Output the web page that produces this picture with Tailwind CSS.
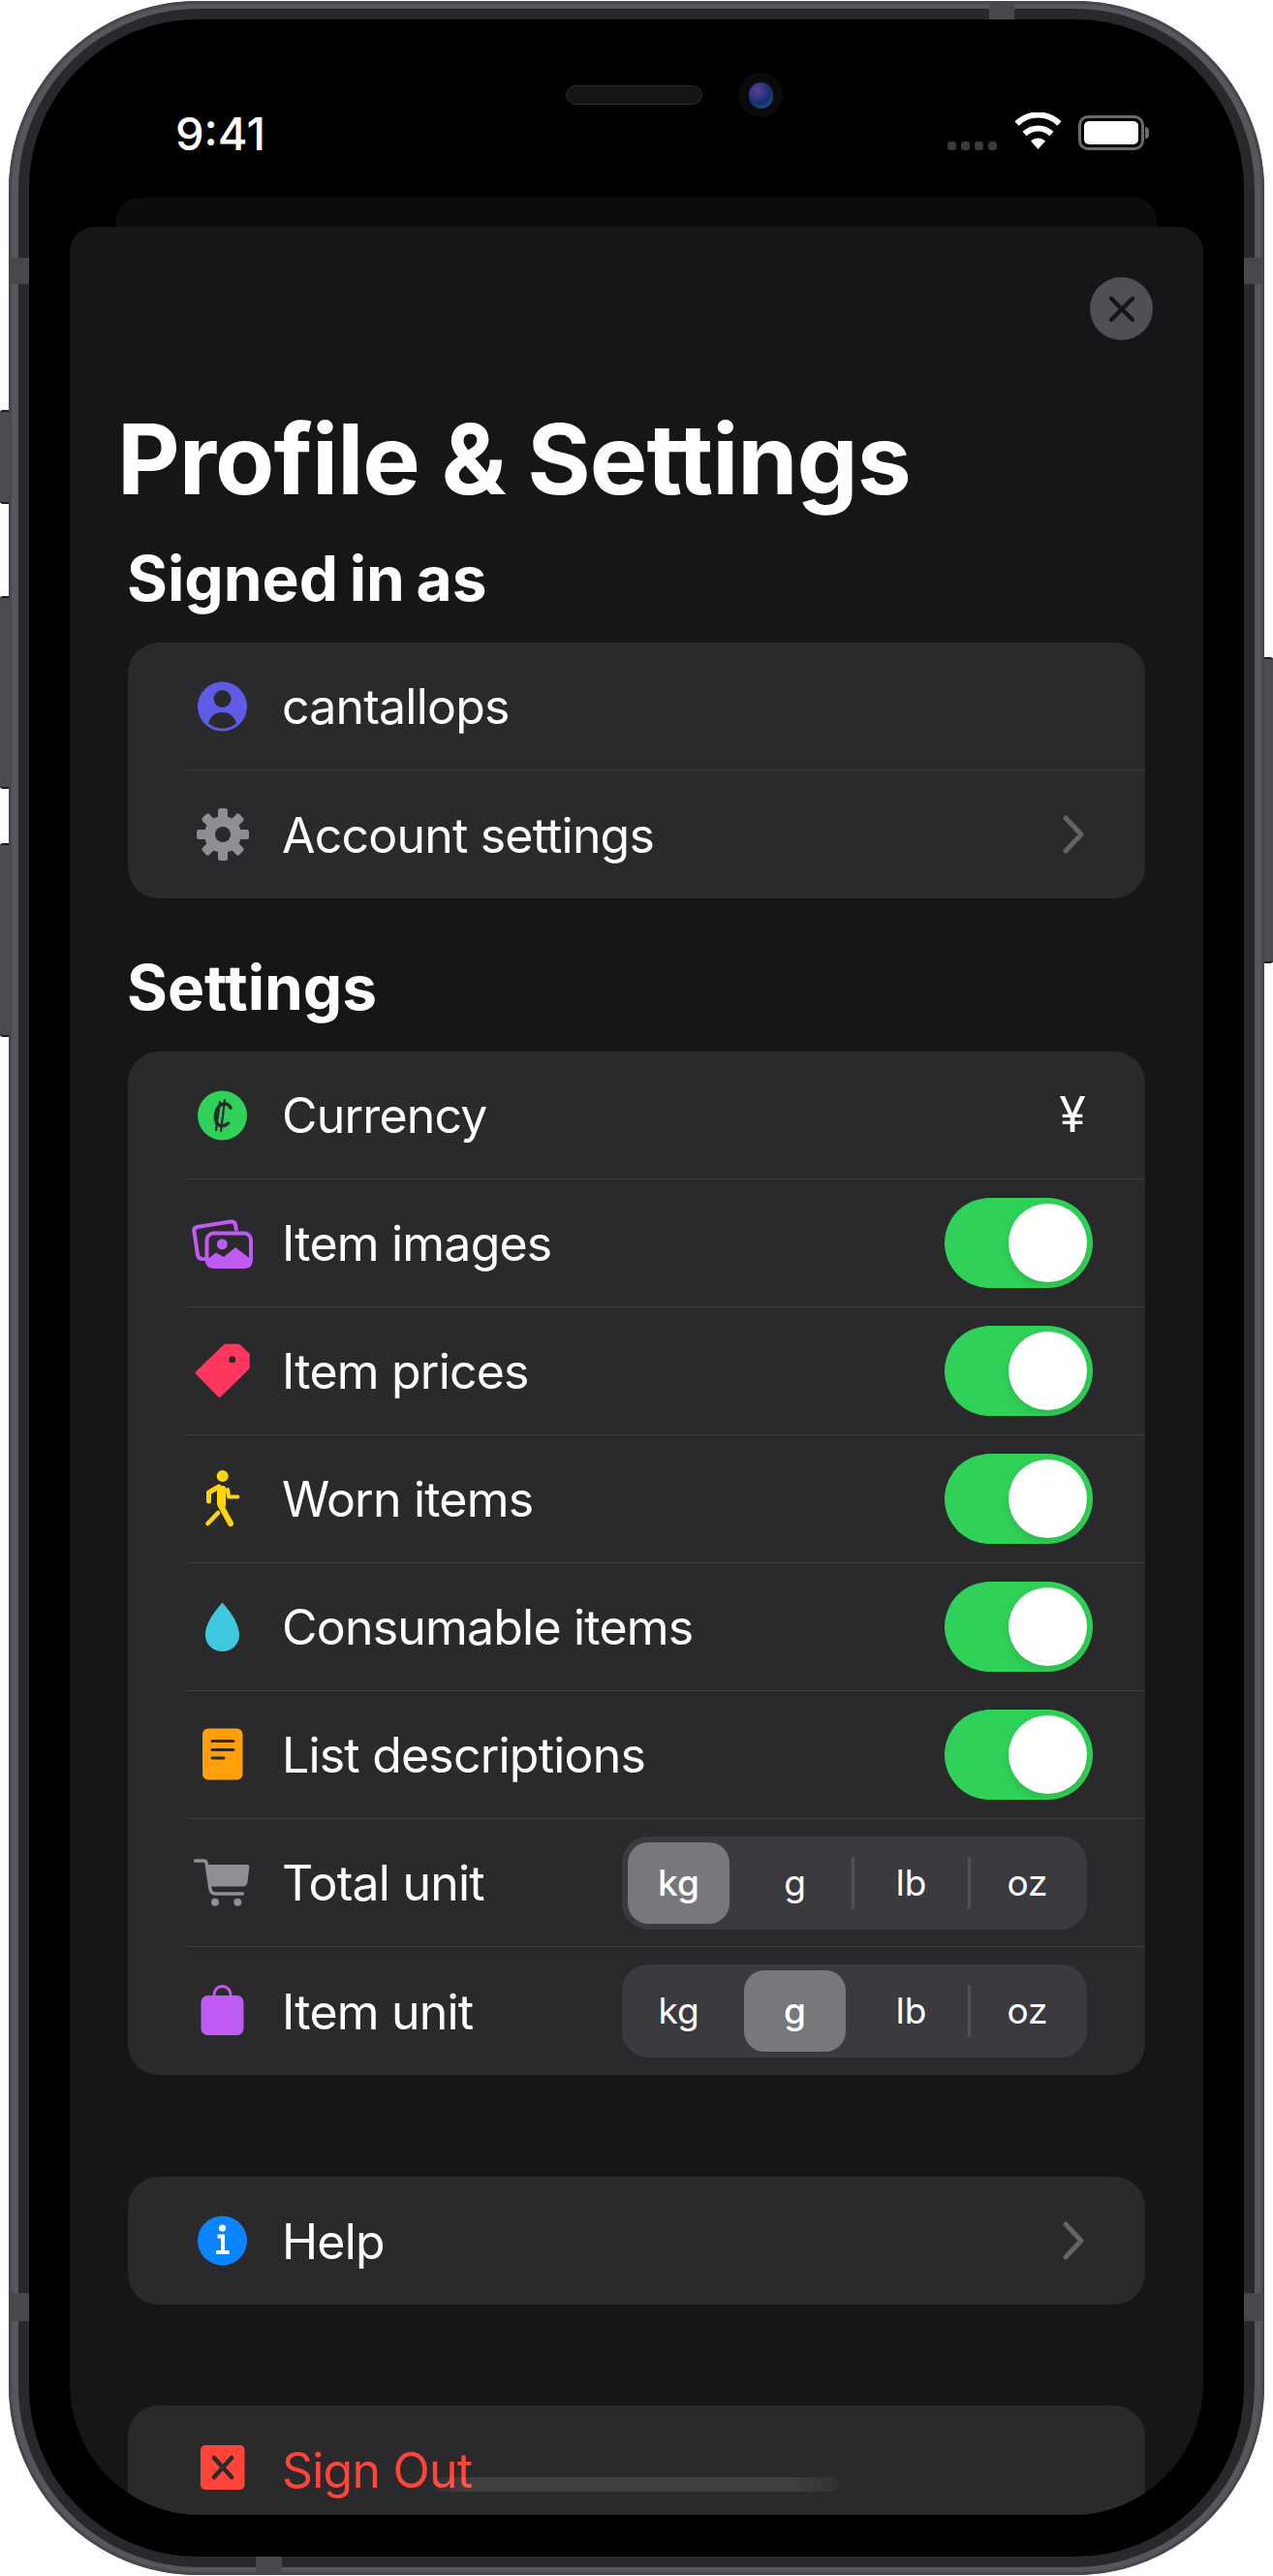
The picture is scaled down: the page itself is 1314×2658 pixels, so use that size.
<!DOCTYPE html>
<html lang="en">
<head>
  <meta charset="UTF-8" />
  <title>Profile & Settings</title>
  <script src="https://cdn.jsdelivr.net/npm/@tailwindcss/browser@4"></script>
</head>
<body class="bg-white w-[1314px] h-[2658px] overflow-hidden relative font-['Inter',sans-serif] text-white">

  <!-- side buttons -->
  <div class="absolute left-0 top-[423px] w-[10px] h-[97px] rounded-l-[3px] bg-[#4b4b51] border-y-2 border-[#1d1d20]"></div>
  <div class="absolute left-0 top-[615px] w-[10px] h-[199px] rounded-l-[3px] bg-[#4b4b51] border-y-2 border-[#1d1d20]"></div>
  <div class="absolute left-0 top-[870px] w-[10px] h-[200px] rounded-l-[3px] bg-[#4b4b51] border-y-2 border-[#1d1d20]"></div>
  <div class="absolute right-0 top-[678px] w-[10px] h-[316px] rounded-r-[3px] bg-[#4b4b51] border-y-2 border-[#1d1d20]"></div>

  <!-- phone frame -->
  <div class="absolute left-[9px] top-[1px] w-[1296px] h-[2656px] rounded-[195px] bg-[#56565c] shadow-[inset_0_0_0_3px_#47474d] pl-[10px] pr-[10px] py-[8px]">
    <div class="w-full h-full rounded-[186px] bg-[#29292d] pl-[11px] pr-[11px] py-[11px]">
      <div class="relative w-full h-full rounded-[174px] bg-black overflow-hidden">

        <div class="absolute left-[90px] top-[184px] w-[1074px] h-[60px] rounded-t-[24px] bg-[#0c0c0d]"></div>

        <!-- status bar -->
        <div class="relative h-[214px]">
          <div class="absolute left-[151px] top-[91px] text-[47px] leading-[54px] font-medium">9:41</div>
          <div class="absolute left-[554px] top-[68px] w-[141px] h-[20px] rounded-full bg-[#151517] border border-[#2a2a2c]"></div>
          <div class="absolute left-[732px] top-[55px] w-[46px] h-[46px] rounded-full bg-[#0a0a0c] flex items-center justify-center">
            <div class="w-[25px] h-[27px] rounded-full bg-[radial-gradient(circle_at_35%_30%,#5c3f9e,#16306b_55%,#1f6a86)]"></div>
          </div>
          <div class="absolute left-[948px] top-[126px] flex gap-[5px]">
            <div class="w-[9px] h-[9px] rounded-[3px] bg-[#3a3a3c]"></div>
            <div class="w-[9px] h-[9px] rounded-[3px] bg-[#3a3a3c]"></div>
            <div class="w-[9px] h-[9px] rounded-[3px] bg-[#3a3a3c]"></div>
            <div class="w-[9px] h-[9px] rounded-[3px] bg-[#3a3a3c]"></div>
          </div>
          <svg class="absolute left-[1017px] top-[96px]" width="49" height="38" viewBox="0 0 49 38" fill="none">
            <path d="M24.5 38 L17 29.5 C21.5 25.6 27.5 25.6 32 29.5 Z" fill="#fff"/>
            <path d="M10.5 22 C18.5 14.5 30.5 14.5 38.5 22" stroke="#fff" stroke-width="6"/>
            <path d="M2.5 11.5 C15 -0.5 34 -0.5 46.5 11.5" stroke="#fff" stroke-width="6"/>
          </svg>
          <div class="absolute left-[1083px] top-[99px] w-[68px] h-[36px] rounded-[10px] border-[3px] border-[#6a6a6c] p-[3px]">
            <div class="w-full h-full rounded-[5px] bg-white"></div>
          </div>
          <div class="absolute left-[1152px] top-[111px] w-[4px] h-[12px] rounded-r-full bg-[#6a6a6c]"></div>
        </div>

        <!-- sheet -->
        <div class="relative mx-[42px] h-[2361px] rounded-t-[26px] rounded-b-[135px] bg-[#161618] overflow-hidden pt-[52px]">
          <div class="flex justify-end pr-[52px]">
            <div class="w-[65px] h-[65px] rounded-full bg-[#505054] flex items-center justify-center">
              <svg width="26" height="26" viewBox="0 0 26 26" fill="none" stroke="#161618" stroke-width="4.5" stroke-linecap="round">
                <path d="M2 2 L24 24 M24 2 L2 24"/>
              </svg>
            </div>
          </div>

          <h1 class="ml-[49px] mt-[73px] text-[100px] leading-[100px] font-bold tracking-[-1px]">Profile &amp; Settings</h1>

          <h2 class="ml-[59px] mt-[41px] text-[64px] leading-[64px] font-bold [word-spacing:-3.5px]">Signed in as</h2>
          <div class="mx-[60px] mt-[34px] rounded-[32px] bg-[#2a2a2c] overflow-hidden">
            <div class="ml-[60px] h-[132px] flex items-center border-b border-[#3c3c3f]">
              <svg class="-ml-[2px] shrink-0" width="80" height="80" viewBox="0 0 80 80">
                <circle cx="39.5" cy="40" r="25.5" fill="#5e5ce6"/>
                <circle cx="39.5" cy="32" r="9" fill="#2a2a2c"/>
                <path d="M25 57 C28 49 33 46 39.5 46 C46 46 51 49 54 57 C50 61 45 62.5 39.5 62.5 C34 62.5 29 61 25 57Z" fill="#2a2a2c"/>
              </svg>
              <span class="ml-[21px] mt-[2px] text-[50px] tracking-[-0.8px]">cantallops</span>
            </div>
            <div class="ml-[60px] h-[132px] flex items-center">
              <svg class="-ml-[2px] shrink-0" width="80" height="80" viewBox="0 0 80 80">
                <g fill="#8e8e93">
                  <rect x="35" y="13" width="10" height="54" rx="2.5"/>
                  <rect x="35" y="13" width="10" height="54" rx="2.5" transform="rotate(45 40 40)"/>
                  <rect x="35" y="13" width="10" height="54" rx="2.5" transform="rotate(90 40 40)"/>
                  <rect x="35" y="13" width="10" height="54" rx="2.5" transform="rotate(135 40 40)"/>
                  <circle cx="40" cy="40" r="19"/>
                </g>
                <circle cx="40" cy="40" r="8" fill="#2a2a2c"/>
              </svg>
              <span class="ml-[21px] mt-[2px] text-[50px] tracking-[-0.8px]">Account settings</span>
              <svg class="ml-auto mr-[62px] shrink-0" width="24" height="40" viewBox="0 0 24 40" fill="none" stroke="#636366" stroke-width="5" stroke-linecap="round" stroke-linejoin="round">
                <path d="M4 3 L20 20 L4 37"/>
              </svg>
            </div>
          </div>

          <h2 class="ml-[59px] mt-[60px] text-[64px] leading-[64px] font-bold">Settings</h2>
          <div class="mx-[60px] mt-[34px] rounded-[32px] bg-[#2a2a2c] overflow-hidden">
            <div class="ml-[60px] h-[132px] flex items-center border-b border-[#3c3c3f]">
              <svg class="-ml-[2px] shrink-0" width="80" height="80" viewBox="0 0 80 80" fill="none">
                <circle cx="39.5" cy="40" r="25.5" fill="#30d158"/>
                <path d="M48 32 C46 28 42 27 39 28.5 C33 31 31 41 33.5 47 C35.5 51.5 41 52 45.5 48" stroke="#2a2a2c" stroke-width="3.5" stroke-linecap="round"/>
                <path d="M38 56 L42 24 M33 55 L37 26" stroke="#2a2a2c" stroke-width="2.2" stroke-linecap="round"/>
              </svg>
              <span class="ml-[21px] mt-[2px] text-[50px] tracking-[-0.8px]">Currency</span>
              <span class="ml-auto mr-[60px] w-[30px] text-center text-[50px]">¥</span>
            </div>

            <div class="ml-[60px] h-[132px] flex items-center border-b border-[#3c3c3f]">
              <svg class="-ml-[2px] shrink-0" width="80" height="80" viewBox="0 0 80 80" fill="none">
                <path d="M22 56 H19 Q15 56 14 52 L10.5 28 Q9.5 24 13.5 23 L48 17.5 Q52 17 53 20.5 L54 27" stroke="#bf5af2" stroke-width="4"/>
                <rect x="23.5" y="29.5" width="45.5" height="34.5" rx="7" stroke="#bf5af2" stroke-width="4"/>
                <circle cx="39.3" cy="40.8" r="5.5" fill="#bf5af2"/>
                <path d="M23 57 L33 49.5 L41 54 L53 44 L70 57 V60 Q70 65 65 65 H28 Q23 65 23 60Z" fill="#bf5af2"/>
              </svg>
              <span class="ml-[21px] mt-[2px] text-[50px] tracking-[-0.8px]">Item images</span>
              <div class="ml-auto mr-[54px] relative w-[153px] h-[93px] rounded-full bg-[#30d158]">
                <div class="absolute right-[6px] top-[6px] w-[81px] h-[81px] rounded-full bg-white shadow-[0_4px_10px_rgba(0,0,0,0.12)]"></div>
              </div>
            </div>

            <div class="ml-[60px] h-[132px] flex items-center border-b border-[#3c3c3f]">
              <svg class="-ml-[2px] shrink-0" width="80" height="80" viewBox="0 0 80 80">
                <path d="M14 41.5 L42.5 14 H56 L65.5 23 V36 L36.5 64.5Z" fill="#ff375f" stroke="#ff375f" stroke-width="4.5" stroke-linejoin="round"/>
                <circle cx="49.7" cy="27.7" r="3.5" fill="#2a2a2c"/>
              </svg>
              <span class="ml-[21px] mt-[2px] text-[50px] tracking-[-0.8px]">Item prices</span>
              <div class="ml-auto mr-[54px] relative w-[153px] h-[93px] rounded-full bg-[#30d158]">
                <div class="absolute right-[6px] top-[6px] w-[81px] h-[81px] rounded-full bg-white shadow-[0_4px_10px_rgba(0,0,0,0.12)]"></div>
              </div>
            </div>

            <div class="ml-[60px] h-[132px] flex items-center border-b border-[#3c3c3f]">
              <svg class="-ml-[2px] shrink-0" width="80" height="80" viewBox="0 0 80 80" fill="none" stroke="#ffd60a" stroke-linecap="round" stroke-linejoin="round">
                <circle cx="39.7" cy="16" r="6" fill="#ffd60a" stroke="none"/>
                <path d="M37 30 L37 45 L48 65" stroke-width="6"/>
                <path d="M36 27 L25.5 33 V42" stroke-width="5"/>
                <path d="M40 29 L40 46" stroke-width="6"/>
                <path d="M35 54 L24.5 65" stroke-width="4.5"/>
                <path d="M45 30 L46 37.5 H55.5" stroke-width="4"/>
              </svg>
              <span class="ml-[21px] mt-[2px] text-[50px] tracking-[-0.8px]">Worn items</span>
              <div class="ml-auto mr-[54px] relative w-[153px] h-[93px] rounded-full bg-[#30d158]">
                <div class="absolute right-[6px] top-[6px] w-[81px] h-[81px] rounded-full bg-white shadow-[0_4px_10px_rgba(0,0,0,0.12)]"></div>
              </div>
            </div>

            <div class="ml-[60px] h-[132px] flex items-center border-b border-[#3c3c3f]">
              <svg class="-ml-[2px] shrink-0" width="80" height="80" viewBox="0 0 80 80">
                <path d="M39.5 14.5 C44 20 57 34 57 48 C57 58 49 65 39.5 65 C30 65 22 58 22 48 C22 34 35 20 39.5 14.5Z" fill="#40c8e0"/>
              </svg>
              <span class="ml-[21px] mt-[2px] text-[50px] tracking-[-0.8px]">Consumable items</span>
              <div class="ml-auto mr-[54px] relative w-[153px] h-[93px] rounded-full bg-[#30d158]">
                <div class="absolute right-[6px] top-[6px] w-[81px] h-[81px] rounded-full bg-white shadow-[0_4px_10px_rgba(0,0,0,0.12)]"></div>
              </div>
            </div>

            <div class="ml-[60px] h-[132px] flex items-center border-b border-[#3c3c3f]">
              <svg class="-ml-[2px] shrink-0" width="80" height="80" viewBox="0 0 80 80" fill="none">
                <rect x="19" y="12.5" width="41.5" height="53" rx="6" fill="#ff9f0a"/>
                <path d="M29 25.5 H51 M29 34.5 H51 M29 43 H41" stroke="#2a2a2c" stroke-width="3" stroke-linecap="round"/>
              </svg>
              <span class="ml-[21px] mt-[2px] text-[50px] tracking-[-0.8px]">List descriptions</span>
              <div class="ml-auto mr-[54px] relative w-[153px] h-[93px] rounded-full bg-[#30d158]">
                <div class="absolute right-[6px] top-[6px] w-[81px] h-[81px] rounded-full bg-white shadow-[0_4px_10px_rgba(0,0,0,0.12)]"></div>
              </div>
            </div>

            <div class="ml-[60px] h-[132px] flex items-center border-b border-[#3c3c3f]">
              <svg class="-ml-[2px] shrink-0" width="80" height="80" viewBox="0 0 80 80" fill="none">
                <path d="M11.5 17 H20.5 Q22.5 17 23 19 L27 46 Q27.8 51 32 51 H60.5" stroke="#8e8e93" stroke-width="3.5" stroke-linecap="round"/>
                <path d="M23 21 H65 Q67.5 21 67.3 23.5 L65.5 39 Q64.9 43.5 60.5 43.5 H27Z" fill="#8e8e93"/>
                <circle cx="32" cy="59.7" r="4" fill="#8e8e93"/>
                <circle cx="55.3" cy="59.7" r="4" fill="#8e8e93"/>
              </svg>
              <span class="ml-[21px] mt-[2px] text-[50px] tracking-[-0.8px]">Total unit</span>
              <div class="ml-auto mr-[60px] flex items-center w-[480px] h-[96px] rounded-[27px] bg-[#3a3a3f] text-[37px]">
                <div class="relative w-[120px] h-[84px]"><div class="ml-[6px] w-[105px] h-[84px] rounded-[21px] bg-[#77777c] flex items-center justify-center font-medium">kg</div></div>
                <div class="relative w-[120px] h-[84px]"><div class="ml-[6px] w-[105px] h-[84px] flex items-center justify-center">g</div><div class="absolute right-0 top-[15px] w-[3px] h-[54px] rounded-full bg-[#525257]"></div></div>
                <div class="relative w-[120px] h-[84px]"><div class="ml-[6px] w-[105px] h-[84px] flex items-center justify-center">lb</div><div class="absolute right-0 top-[15px] w-[3px] h-[54px] rounded-full bg-[#525257]"></div></div>
                <div class="relative w-[120px] h-[84px]"><div class="ml-[6px] w-[105px] h-[84px] flex items-center justify-center">oz</div></div>
              </div>
            </div>

            <div class="ml-[60px] h-[132px] flex items-center">
              <svg class="-ml-[2px] shrink-0" width="80" height="80" viewBox="0 0 80 80" fill="none">
                <rect x="17.5" y="24" width="44" height="41" rx="7" fill="#bf5af2"/>
                <path d="M31 25 V23 A8.5 8.5 0 0 1 48 23 V25" stroke="#bf5af2" stroke-width="3"/>
              </svg>
              <span class="ml-[21px] mt-[2px] text-[50px] tracking-[-0.8px]">Item unit</span>
              <div class="ml-auto mr-[60px] flex items-center w-[480px] h-[96px] rounded-[27px] bg-[#3a3a3f] text-[37px]">
                <div class="relative w-[120px] h-[84px]"><div class="ml-[6px] w-[105px] h-[84px] flex items-center justify-center">kg</div></div>
                <div class="relative w-[120px] h-[84px]"><div class="ml-[6px] w-[105px] h-[84px] rounded-[21px] bg-[#77777c] flex items-center justify-center font-medium">g</div></div>
                <div class="relative w-[120px] h-[84px]"><div class="ml-[6px] w-[105px] h-[84px] flex items-center justify-center">lb</div><div class="absolute right-0 top-[15px] w-[3px] h-[54px] rounded-full bg-[#525257]"></div></div>
                <div class="relative w-[120px] h-[84px]"><div class="ml-[6px] w-[105px] h-[84px] flex items-center justify-center">oz</div></div>
              </div>
            </div>
          </div>

          <div class="mx-[60px] mt-[105px] rounded-[32px] bg-[#2a2a2c]">
            <div class="ml-[60px] h-[132px] flex items-center">
              <svg class="-ml-[2px] shrink-0" width="80" height="80" viewBox="0 0 80 80" fill="none">
                <circle cx="39.5" cy="40" r="25.5" fill="#0a84ff"/>
                <circle cx="39.5" cy="27" r="3.6" fill="#fff"/>
                <path d="M34.5 35.5 H40 V51.5 M33 52 H46.5" stroke="#fff" stroke-width="4"/>
              </svg>
              <span class="ml-[21px] mt-[2px] text-[50px] tracking-[-0.8px]">Help</span>
              <svg class="ml-auto mr-[62px] shrink-0" width="24" height="40" viewBox="0 0 24 40" fill="none" stroke="#636366" stroke-width="5" stroke-linecap="round" stroke-linejoin="round">
                <path d="M4 3 L20 20 L4 37"/>
              </svg>
            </div>
          </div>

          <div class="mx-[60px] mt-[104px] rounded-[32px] bg-[#2a2a2c]">
            <div class="ml-[60px] h-[132px] flex items-center">
              <svg class="-ml-[2px] shrink-0" width="80" height="80" viewBox="0 0 80 80" fill="none">
                <rect x="17" y="15" width="45.5" height="46" rx="5" fill="#ff453a"/>
                <path d="M31 28 L49 48 M49 28 L31 48" stroke="#2a2a2c" stroke-width="4.5" stroke-linecap="round"/>
              </svg>
              <span class="ml-[21px] mt-[2px] text-[50px] tracking-[-0.8px] text-[#ff453a]">Sign Out</span>
            </div>
          </div>
        </div>

        <!-- home indicator -->
        <div class="absolute left-[418px] top-[2536px] w-[418px] h-[15px] rounded-full bg-[linear-gradient(90deg,rgba(255,255,255,0.03),rgba(255,255,255,0.1)_8%,rgba(255,255,255,0.1)_88%,rgba(255,255,255,0.03))]"></div>
      </div>
    </div>

    <!-- antenna bands -->
    <div class="absolute left-0 top-[265px] w-[21px] h-[27px] bg-[#48484c]"></div>
    <div class="absolute right-0 top-[265px] w-[21px] h-[27px] bg-[#48484c]"></div>
    <div class="absolute left-0 top-[2365px] w-[21px] h-[29px] bg-[#48484c]"></div>
    <div class="absolute right-0 top-[2365px] w-[21px] h-[29px] bg-[#48484c]"></div>
    <div class="absolute left-[1012px] top-0 w-[26px] h-[19px] bg-[#48484c]"></div>
    <div class="absolute left-[255px] bottom-0 w-[27px] h-[19px] bg-[#48484c]"></div>
  </div>
</body>
</html>
